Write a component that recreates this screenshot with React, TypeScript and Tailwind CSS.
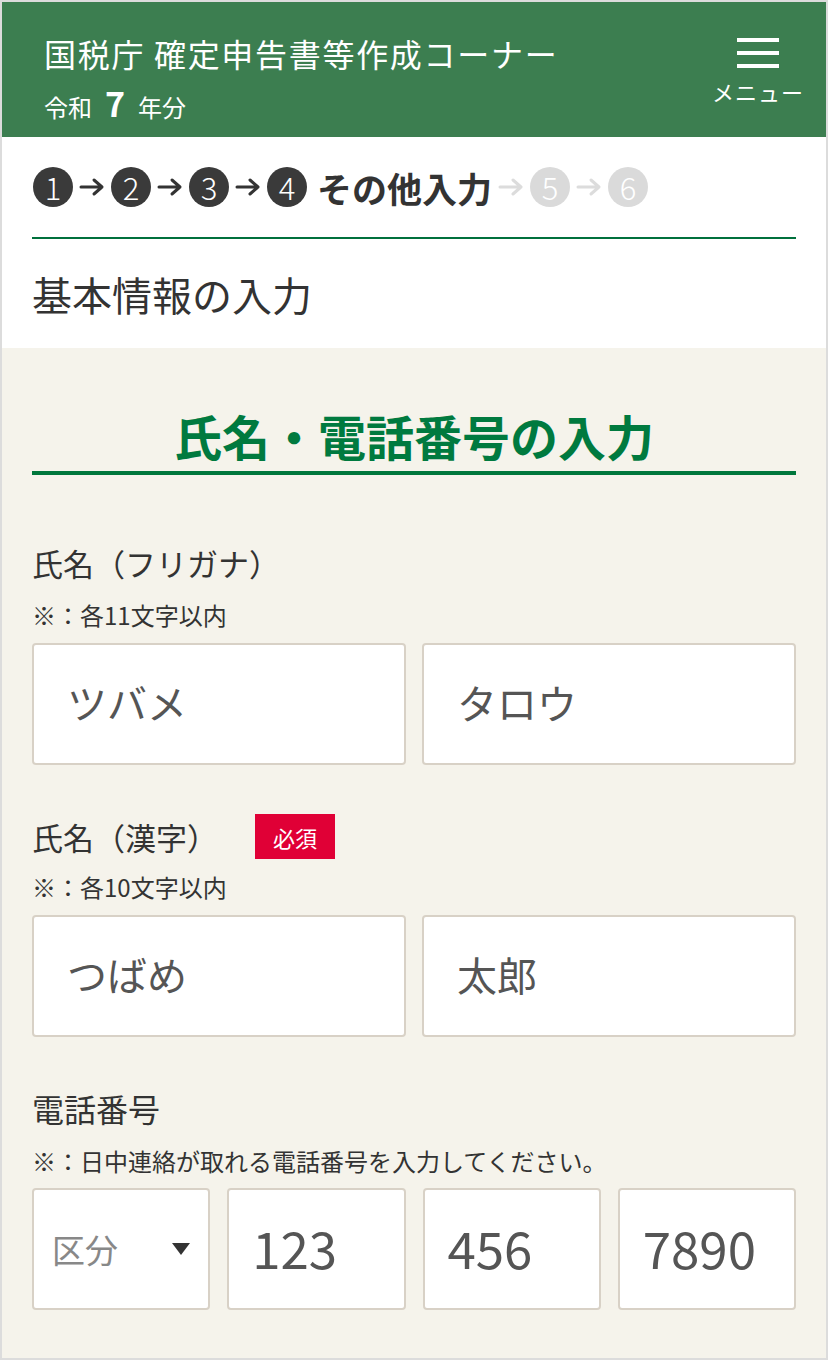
import React from 'react'

const font = { fontFamily: '"Noto Sans CJK JP", "Noto Sans", sans-serif' }

function Circle({ n, active }: { n: number; active: boolean }) {
  return (
    <div
      className={`w-[40px] h-[40px] rounded-full flex items-center justify-center text-white text-[31px] font-light leading-none ${
        active ? 'bg-[#3a3a3a]' : 'bg-[#dadada]'
      }`}
    >
      <span className="-mt-[2px]">{n}</span>
    </div>
  )
}

function Arrow({ active }: { active: boolean }) {
  return (
    <div className="w-[38px] flex justify-center">
      <svg width="26" height="20" viewBox="0 0 26 20" fill="none">
        <path
          d="M2 10H23M15 3L23 10L15 17"
          stroke={active ? '#333333' : '#dcdcdc'}
          strokeWidth="3"
          strokeLinecap="round"
          strokeLinejoin="round"
        />
      </svg>
    </div>
  )
}

function TextBox({ value, className = '' }: { value: string; className?: string }) {
  return (
    <div
      className={`h-[122px] bg-white border-2 border-[#d8d1c6] rounded-[4px] flex items-center text-[#555] ${className}`}
    >
      {value}
    </div>
  )
}

export default function App() {
  return (
    <div className="w-[828px] h-[1360px] border-2 border-[#dcdcdc] bg-[#f5f3eb] overflow-hidden" style={font}>
      {/* Header */}
      <header className="bg-[#3c7e50] h-[135px] flex justify-between text-white">
        <div className="pl-[42px] pt-[35px]">
          <div className="text-[32px] leading-none tracking-[1.7px]">国税庁 確定申告書等作成コーナー</div>
          <div className="mt-[17px] flex items-baseline">
            <span className="text-[24px] leading-none">令和</span>
            <span className="text-[34px] font-bold leading-none mx-[13px]">7</span>
            <span className="text-[24px] leading-none">年分</span>
          </div>
        </div>
        <div className="w-[110px] mr-[13px] flex flex-col items-center pt-[36px]">
          <div className="flex flex-col gap-[9px]">
            <div className="w-[42px] h-[4px] bg-white" />
            <div className="w-[42px] h-[4px] bg-white" />
            <div className="w-[42px] h-[4px] bg-white" />
          </div>
          <div className="mt-[12px] text-[22px] leading-none tracking-[1px]">メニュー</div>
        </div>
      </header>

      {/* Steps */}
      <div className="bg-white px-[30px]">
        <div className="h-[100px] flex items-center pl-[1px]">
          <Circle n={1} active />
          <Arrow active />
          <Circle n={2} active />
          <Arrow active />
          <Circle n={3} active />
          <Arrow active />
          <Circle n={4} active />
          <span className="ml-[10px] text-[35px] font-bold leading-none text-[#333]">その他入力</span>
          <Arrow active={false} />
          <Circle n={5} active={false} />
          <Arrow active={false} />
          <Circle n={6} active={false} />
        </div>
        <div className="h-[2px] bg-[#00703c]" />
        <div className="h-[109px] flex items-center text-[40px] leading-none text-[#333]">基本情報の入力</div>
      </div>

      {/* Form */}
      <div className="px-[30px]">
        <h2 className="pt-[63px] pb-[12px] border-b-4 border-[#00773c] text-center text-[48px] font-bold leading-none text-[#007a3f]">
          氏名・電話番号の入力
        </h2>

        <div className="mt-[72px] text-[31px] leading-none text-[#333]">氏名（フリガナ）</div>
        <div className="mt-[25px] text-[24px] leading-none text-[#333]">※：各11文字以内</div>
        <div className="mt-[16px] grid grid-cols-2 gap-[16px] text-[40px]">
          <TextBox value="ツバメ" className="pl-[33px] pb-[4px]" />
          <TextBox value="タロウ" className="pl-[33px] pb-[4px]" />
        </div>

        <div className="mt-[49px] h-[45px] flex items-center">
          <span className="text-[31px] leading-none text-[#333]">氏名（漢字）</span>
          <span className="ml-[37px] w-[80px] h-[45px] bg-[#e00036] text-white text-[22px] flex items-center justify-center leading-none">
            必須
          </span>
        </div>
        <div className="mt-[16px] text-[24px] leading-none text-[#333]">※：各10文字以内</div>
        <div className="mt-[16px] grid grid-cols-2 gap-[16px] text-[40px]">
          <TextBox value="つばめ" className="pl-[33px] pb-[4px]" />
          <TextBox value="太郎" className="pl-[33px] pb-[4px]" />
        </div>

        <div className="mt-[55px] text-[32px] leading-none text-[#333]">電話番号</div>
        <div className="mt-[25px] text-[24px] leading-none text-[#333]">※：日中連絡が取れる電話番号を入力してください。</div>
        <div className="mt-[15px] grid grid-cols-4 gap-[17px]">
          <div className="h-[122px] bg-white border-2 border-[#d8d1c6] rounded-[4px] flex items-center justify-between pl-[18px] pr-[18px]">
            <span className="text-[33px] text-[#888] leading-none">区分</span>
            <svg width="18" height="12" viewBox="0 0 18 12">
              <path d="M0 0H18L9 12Z" fill="#333" />
            </svg>
          </div>
          <TextBox value="123" className="pl-[23px] pb-[4px] text-[51px]" />
          <TextBox value="456" className="pl-[23px] pb-[4px] text-[51px]" />
          <TextBox value="7890" className="pl-[23px] pb-[4px] text-[51px]" />
        </div>
      </div>
    </div>
  )
}
